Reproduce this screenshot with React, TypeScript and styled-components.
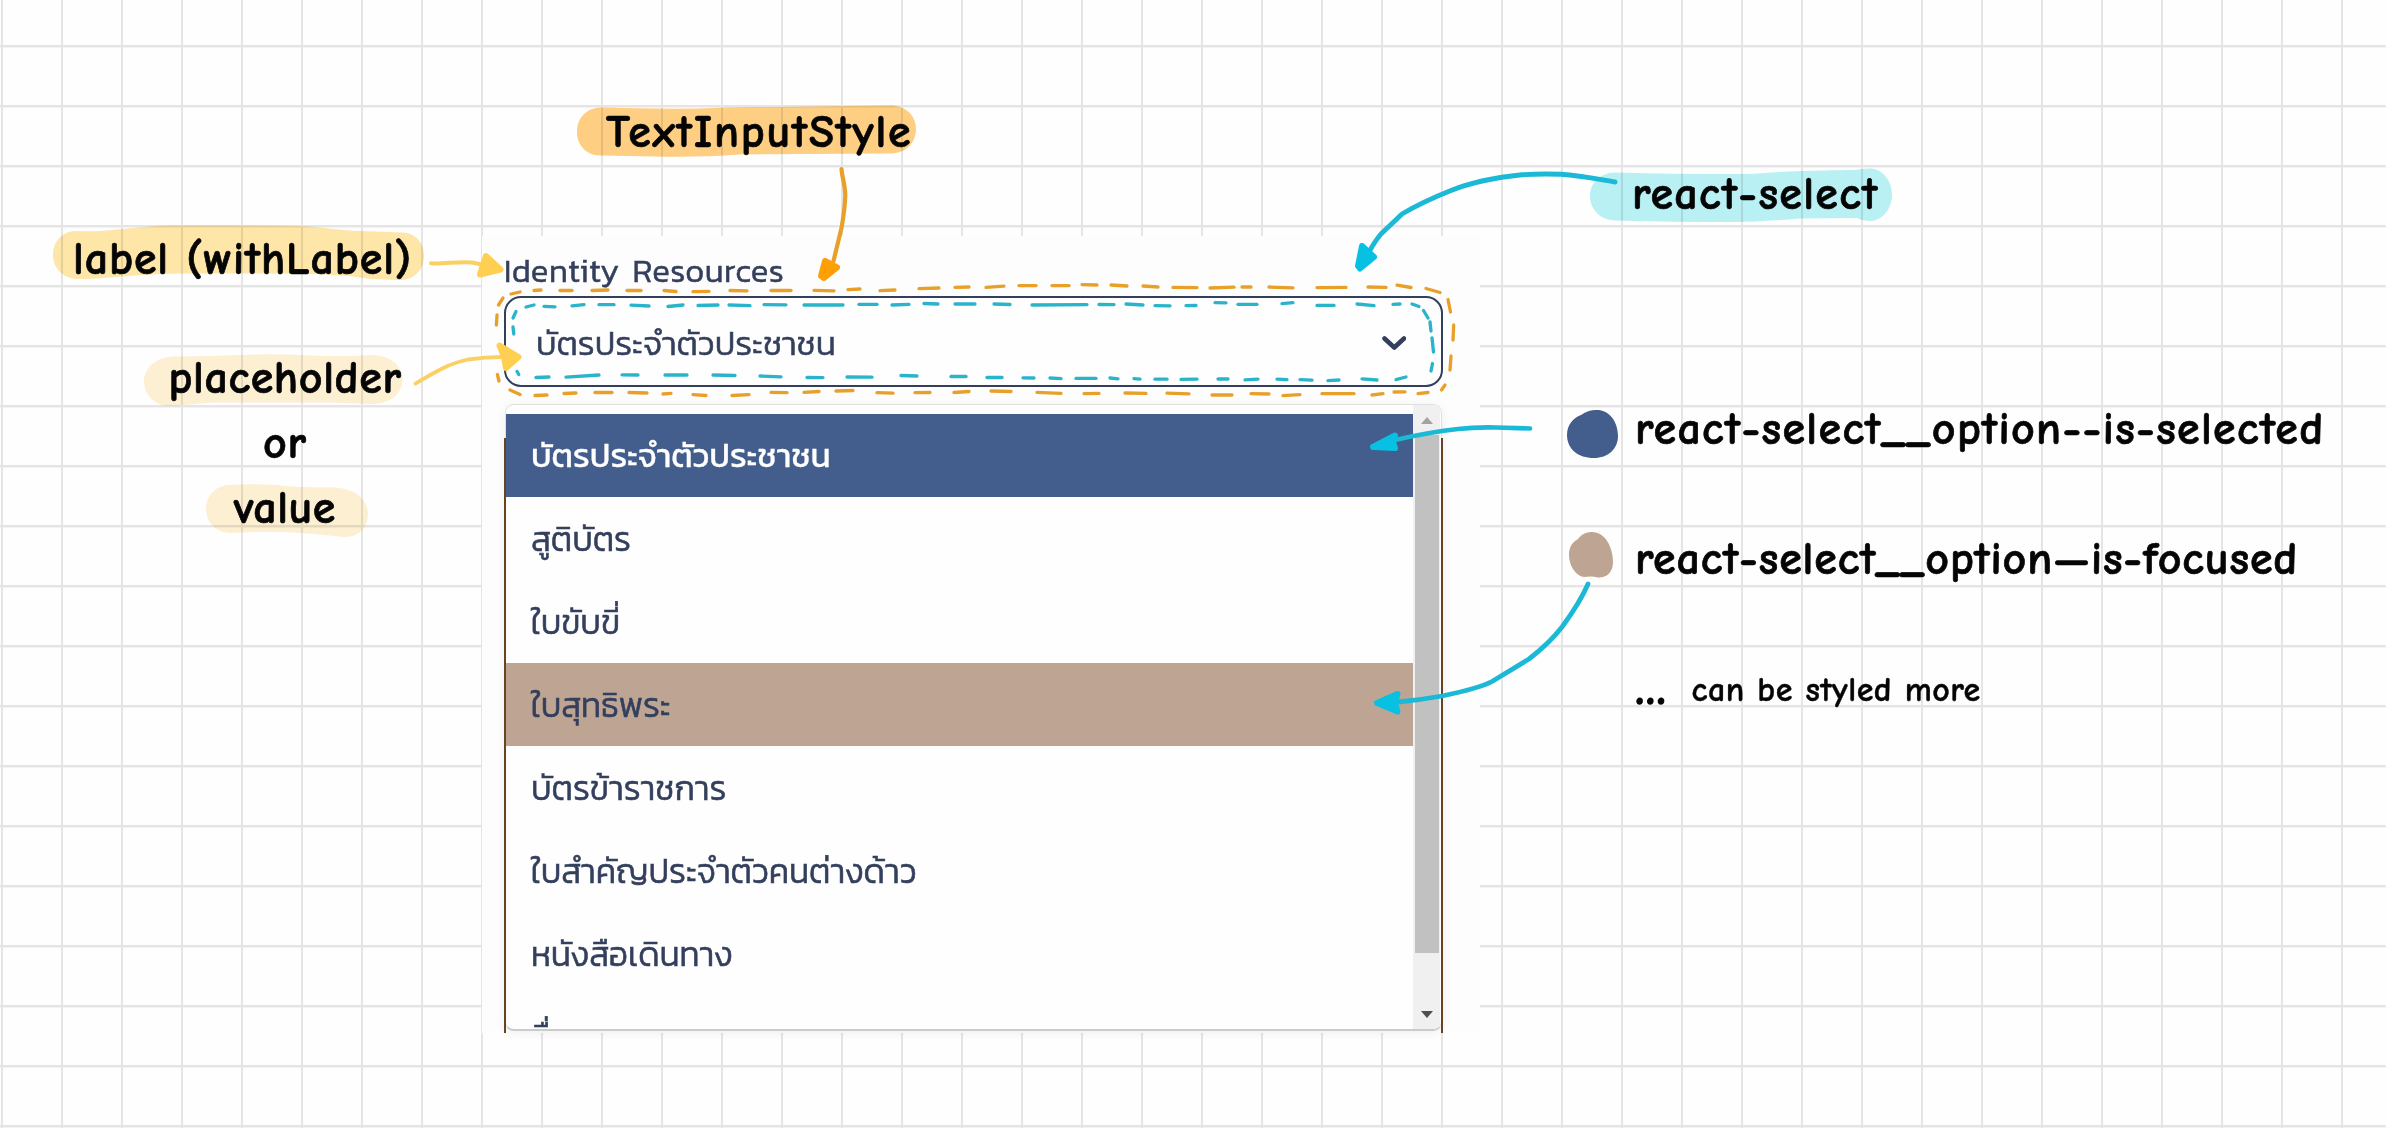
import React from "react";
import styled, { createGlobalStyle } from "styled-components";

const GlobalStyle = createGlobalStyle`
  body { margin: 0; background: #fff; }
  *, *::before, *::after { box-sizing: border-box; }
`;

const navy = "#333f5c";
const cyan = "#1bb9d6";
const cyanHead = "#08c0e2";
const orange = "#e8a029";
const yellow = "#fbd062";

const Board = styled.main`
  position: relative;
  width: 2386px;
  height: 1128px;
  overflow: hidden;
  background-color: #fefefe;
  background-image:
    linear-gradient(to right, transparent 1px, #e5e5e5 1px, #e5e5e5 3px, transparent 3px),
    linear-gradient(to bottom, #e5e5e5 2px, #f3f3f3 2px, #f3f3f3 3px, transparent 3px);
  background-size: 60px 60px;
  background-position: 0 0, 0 45px;
`;

const Specimen = styled.section`
  position: absolute;
  left: 482px;
  top: 236px;
  width: 998px;
  height: 797px;
  padding: 8px 37px 0 22px;
  display: flex;
  flex-direction: column;
  background: #fdfdfd;
  color: ${navy};
  font-family: Kanit, "Noto Sans Thai", "Noto Sans", sans-serif;
  font-weight: 300;
  -webkit-text-stroke: 0.6px currentColor;
`;

const FieldLabel = styled.label`
  height: 52px;
  padding-left: 0;
  font-size: 33px;
  line-height: 53px;
  letter-spacing: 0.45px;
  word-spacing: 5px;
`;

const Control = styled.div`
  height: 91px;
  flex: none;
  display: flex;
  align-items: center;
  justify-content: space-between;
  padding: 3px 35px 0 30px;
  border: 2px solid ${navy};
  border-radius: 17px;
  background: #fefefe;
  font-size: 33.4px;
`;

const MenuFrame = styled.div`
  position: relative;
  height: 629px;
  margin-top: 17px;
  padding: 0 1px 2px;
  &::after {
    content: "";
    position: absolute;
    inset: 34px 0 0 0;
    border: solid #66441f;
    border-width: 0 2px;
    pointer-events: none;
  }
`;

const Menu = styled.div`
  height: 627px;
  display: flex;
  overflow: hidden;
  border: 1px solid #e2dfdf;
  border-bottom: 2px solid #cbcbcb;
  border-radius: 9px;
  background: #fefefe;
  box-shadow: 0 2px 12px rgba(0, 0, 0, 0.06);
`;

const Options = styled.ul`
  flex: 1;
  margin: 0;
  padding: 9px 0 0;
  overflow: hidden;
  list-style: none;
`;

const Option = styled.li<{ $state?: "selected" | "focused" }>`
  height: 83px;
  padding: ${(p) => (p.$state === "selected" ? "0" : "1px")} 0 0 25px;
  font-size: ${(p) => (p.$state === "selected" ? 33.2 : 33.5)}px;
  line-height: 83px;
  font-weight: ${(p) => (p.$state === "selected" ? 400 : 300)};
  color: ${(p) => (p.$state === "selected" ? "#fff" : navy)};
  background: ${(p) =>
    p.$state === "selected" ? "#435e8c" : p.$state === "focused" ? "#bea593" : "transparent"};
  -webkit-text-stroke-width: ${(p) => (p.$state === "selected" ? "0.3px" : "0.6px")};
`;

const Scrollbar = styled.div`
  width: 27px;
  margin-right: 1px;
  display: flex;
  flex-direction: column;
  align-items: center;
  background: #f0f0f0;
`;

const Thumb = styled.div`
  width: 24px;
  height: 518px;
  margin-top: 11px;
  margin-bottom: 58px;
  background: #c1c1c1;
`;

const ScrollArrow = styled.div<{ $dir: "up" | "down" }>`
  width: 0;
  height: 0;
  margin-top: ${(p) => (p.$dir === "up" ? "12px" : "0")};
  border: 6px solid transparent;
  ${(p) =>
    p.$dir === "up"
      ? "border-top: 0; border-bottom: 7px solid #a3a3a3;"
      : "border-bottom: 0; border-top: 7px solid #505050;"}
`;

const Layer = styled.svg<{ $marker?: boolean }>`
  position: absolute;
  inset: 0;
  width: 2386px;
  height: 1128px;
  pointer-events: none;
  mix-blend-mode: ${(p) => (p.$marker ? "multiply" : "normal")};
`;

const Note = styled.span<{ $size?: number; $gap?: number; $ink?: number }>`
  font-family: "Comic Neue", "Comic Sans MS", Inter, sans-serif;
  font-feature-settings: "liga" 0;
  font-weight: 700;
  font-size: ${(p) => p.$size ?? 46}px;
  line-height: 60px;
  letter-spacing: ${(p) => p.$gap ?? 0.85}px;
  white-space: pre;
  color: #050505;
  -webkit-text-stroke: ${(p) => p.$ink ?? 0.7}px #050505;
`;

const Pin = styled.div<{ $x: number; $y: number }>`
  position: absolute;
  left: ${(p) => p.$x}px;
  top: ${(p) => p.$y}px;
  display: flex;
`;

const ValueNotes = styled(Pin)`
  width: 234px;
  flex-direction: column;
  align-items: center;
  gap: 5px;
`;

const Legend = styled(Pin)`
  flex-direction: column;
  gap: 70px;
`;

const LegendRow = styled.div`
  display: grid;
  grid-template-columns: 68px auto;
  height: 60px;
`;

const Swatch = styled.svg`
  width: 52px;
  height: 60px;
`;

const MoreNotes = styled.div`
  grid-column: 2;
  display: flex;
  align-items: center;
  gap: 25px;
`;

type Seg = [number, number, number, number];

const orangeDashes: Seg[] = [
  [511, 294, 520, 292], [534, 290.5, 541, 290], [560, 290.5, 572, 290.5], [592, 290.5, 608, 290], [627, 290.5, 641, 290.5],
  [664, 290.5, 676, 291.5], [693, 291.7, 709, 291.3], [730, 290.5, 747, 290.8], [771, 290.5, 791, 290.5], [814, 290.3, 834, 290.8],
  [848, 289.7, 860, 289], [880, 290.7, 895, 290], [919, 288.6, 939, 288], [955, 287.3, 969, 287], [986, 287.3, 1004, 286.2],
  [1019, 285.6, 1036, 285.6], [1052, 285.6, 1069, 285.6], [1082, 284.6, 1097, 285], [1111, 285, 1127, 286], [1143, 286, 1158, 287],
  [1173, 287.4, 1197, 287.6], [1210, 288, 1234, 287.2], [1242, 287, 1251, 287], [1269, 287, 1293, 287.8], [1317, 287.6, 1346, 287.4],
  [1368, 287, 1386, 287.4], [1397, 285.2, 1411, 287.5], [1426, 288.5, 1440, 292.5], [1448, 299.5, 1450.5, 312],
  [1453.7, 325, 1453, 340], [1451, 356, 1450, 370], [1445, 385, 1441.5, 390],
  [510, 390, 520, 394.5], [535, 395.5, 547, 395], [564, 393.5, 576, 393], [595, 392.5, 612, 392.5], [629, 392.5, 647, 393],
  [663, 394, 671, 393.4], [693, 394.6, 706, 395.5], [732, 395.5, 749, 394.7], [771, 392.3, 787, 392.6], [804, 392.3, 819, 391.5],
  [836, 391, 853, 390.5], [877, 392.7, 893, 393.2], [915, 392.7, 930, 392.5], [954, 392.5, 969, 391.5], [991, 391, 1011, 391.5],
  [1037, 392.4, 1061, 393.4], [1084, 393.6, 1099, 393.4], [1125, 393, 1146, 393.4], [1167, 393.2, 1189, 393.8], [1212, 395, 1232, 395],
  [1251, 393.6, 1269, 394], [1283, 395.6, 1300, 394.7], [1322, 393.6, 1354, 393.6], [1372, 395, 1383, 393.7], [1394, 392, 1405, 391.8],
  [1418, 393.6, 1428, 392.5], [503, 298, 498.5, 305], [497, 315, 496.4, 325], [497.4, 374.5, 499, 381],
];

const cyanDashes: Seg[] = [
  [526, 307, 534, 305], [544, 306.3, 555, 306.8], [572, 305.8, 584, 304.6], [599, 304.7, 614, 304.7], [631, 305.2, 649, 306],
  [668, 306.5, 683, 305], [698, 305.5, 718, 305], [729, 305, 750, 305.6], [764, 304.6, 786, 304.8], [804, 305, 843, 305],
  [859, 304.3, 877, 304.3], [892, 305, 909, 304.3], [924, 303.5, 938, 304], [955, 304, 975, 304], [994, 304, 1010, 304.5],
  [1032, 305, 1087, 304.6], [1099, 304.5, 1114, 304.6], [1126, 304, 1143, 305], [1155, 305.6, 1170, 305.8], [1186, 305.6, 1196, 305.5],
  [1215, 302.6, 1226, 302.8], [1238, 304.3, 1257, 304.3], [1282, 303.6, 1293, 302.6], [1317, 305.4, 1334, 305.4],
  [1357, 304, 1374, 305.6], [1393, 304.4, 1400, 304], [1412, 304, 1419, 306.5], [1423.5, 310.5, 1428, 318], [1430, 322, 1431, 331],
  [1432, 338, 1433.5, 352], [1432.5, 363.5, 1431, 371], [516, 311.5, 513, 318], [513, 327, 513.8, 334], [517, 371.5, 518.8, 374.5],
  [536, 377.5, 549, 377], [566, 377.2, 599, 375], [622, 374.8, 638, 375], [665, 375, 687, 375], [713, 375, 735, 375.5],
  [760, 376, 781, 376.8], [807, 377.5, 823, 377.6], [847, 377, 872, 377.2], [901, 375.5, 917, 376], [951, 376.5, 966, 376.5],
  [987, 377.5, 1002, 377.5], [1023, 377.8, 1034, 378], [1050, 378, 1061, 378.6], [1076, 378.4, 1096, 378.4], [1110, 378, 1118, 378.8],
  [1134, 378.6, 1140, 379.2], [1155, 379.2, 1167, 379.2], [1181, 379.4, 1197, 379.2], [1218, 379, 1228, 379], [1245, 379.8, 1258, 379.2],
  [1277, 379.2, 1287, 379.6], [1300, 379.6, 1312, 380.2], [1328, 380.6, 1339, 380], [1362, 378.8, 1377, 380], [1396, 379.6, 1406, 377],
];

const Dashes = ({ items, color }: { items: Seg[]; color: string }) => (
  <g stroke={color} strokeWidth={3.3} strokeLinecap="round" fill="none">
    {items.map(([x1, y1, x2, y2], i) => (
      <line key={i} x1={x1} y1={y1} x2={x2} y2={y2} />
    ))}
  </g>
);

const options: { text: string; state?: "selected" | "focused" }[] = [
  { text: "บัตรประจำตัวประชาชน", state: "selected" },
  { text: "สูติบัตร" },
  { text: "ใบขับขี่" },
  { text: "ใบสุทธิพระ", state: "focused" },
  { text: "บัตรข้าราชการ" },
  { text: "ใบสำคัญประจำตัวคนต่างด้าว" },
  { text: "หนังสือเดินทาง" },
  { text: "อื่นๆ" },
];

export default function App() {
  return (
    <>
      <GlobalStyle />
      <Board>
        <Specimen>
          <FieldLabel>Identity Resources</FieldLabel>
          <Control>
            <span>บัตรประจำตัวประชาชน</span>
            <svg width="24" height="14" viewBox="0 0 24 14" fill="none" stroke={navy} strokeWidth="4.6" strokeLinecap="round" strokeLinejoin="round">
              <path d="M2.5 2.500L12.3 11.500L22 2.500" />
            </svg>
          </Control>
          <MenuFrame>
            <Menu>
              <Options>
                {options.map((o) => (
                  <Option key={o.text} $state={o.state}>{o.text}</Option>
                ))}
              </Options>
              <Scrollbar>
                <ScrollArrow $dir="up" />
                <Thumb />
                <ScrollArrow $dir="down" />
              </Scrollbar>
            </Menu>
          </MenuFrame>
        </Specimen>

        <Layer $marker viewBox="0 0 2386 1128">
          <path fill="#ffe6a9" d="M75 231Q90 231.500 100 231C120 230 140 226.500 165 225.500Q230 225 300 226C325 227 340 230.500 360 231L402 232.500C416 233 424 243 424 256C424 270 414 280 400 280C380 279.500 365 279 350 276Q320 273.500 290 273.500L180 273.500C155 274 130 276 115 277Q95 279.500 77 279C62 278 53 267 53 255C53 242 62 231.500 75 231Z" />
          <path fill="#fdf0d3" d="M175 356.500Q215 356 240 355Q275 353.500 310 355.500Q345 357 372 355C390 355 402.500 366 402.500 379C402.500 394 390 404 372 404Q350 403 330 402.500L220 402.500C195 403 185 406 165 406C152 403 144 393 144 382C144 367 157 357 175 356.500Z" />
          <path fill="#fdf0d3" d="M228 485Q250 483.500 275 485Q295 487.500 335 487.500C355 489 368 499 368 514C368 528 358 537 345 537Q320 534 295 532.500Q260 531 228 533C214 531 206 521 206 509C206 496 215 486.500 228 485Z" />
          <path fill="#ffd084" d="M601 107.500Q650 109 700 108.500Q730 106.500 770 107L893 105.500C908 107 916 117 916 129C916 143 906 152.500 892 153.500L740 154.500Q700 157.500 655 156.500L600 155.500C586 155 577 145 577 132C577 118 586 108 601 107.500Z" />
          <path fill="#b9f1f5" d="M1615 172.500Q1690 174.500 1750 174C1780 172 1800 170.500 1855 170Q1862 168 1872 168.500C1884 170 1892 182 1892 195C1892 209 1882 221 1870 221Q1860 220 1857 218L1800 218.500Q1760 222 1735 222Q1680 222 1615 220.500C1600 220 1590 209 1590 196C1590 183 1600 173 1615 172.500Z" />
        </Layer>

        <Pin $x={606} $y={103}>
          <Note $gap={1.75}>TextInputStyle</Note>
        </Pin>
        <Pin $x={73} $y={230}>
          <Note>label (withLabel)</Note>
        </Pin>
        <ValueNotes $x={168} $y={349}>
          <Note $gap={0.6}>placeholder</Note>
          <Note>or</Note>
          <Note $gap={0.5}>value</Note>
        </ValueNotes>
        <Pin $x={1632} $y={165}>
          <Note $gap={1.3}>react-select</Note>
        </Pin>
        <Legend $x={1567} $y={400}>
          <LegendRow>
            <Swatch viewBox="1567 400 52 60">
              <path fill="#435e8c" d="M1597 410C1608 410 1618 420 1618 436C1618 449 1608 458 1594 458C1578 458 1567 449 1567 435C1567 425 1573 418 1581 415C1587 411 1591 410 1597 410Z" />
            </Swatch>
            <Note $gap={1.32}>react-select__option--is-selected</Note>
          </LegendRow>
          <LegendRow>
            <Swatch viewBox="1567 530 52 60">
              <path fill="#bea593" d="M1592 532C1605 532 1613 547 1613 562C1613 573 1606 578 1598 577.500C1593 576 1588 576.500 1584 577C1576 576 1569 566 1569 555C1569 546 1573 542 1578 539C1582 534 1586 532 1592 532Z" />
            </Swatch>
            <Note>react-select__option—is-focused</Note>
          </LegendRow>
          <LegendRow>
            <MoreNotes>
              <Note $ink={1.6}>…</Note>
              <Note $size={34} $gap={0.5} $ink={0.4}>can be styled more</Note>
            </MoreNotes>
          </LegendRow>
        </Legend>

        <Layer viewBox="0 0 2386 1128">
          <Dashes items={orangeDashes} color={orange} />
          <Dashes items={cyanDashes} color="#2ab4cb" />
          <g fill="none" strokeLinecap="round" strokeLinejoin="round">
            <path stroke={yellow} strokeWidth="4" d="M431 263.300C445 264 460 261 472 262.500L484 265" />
            <path stroke={yellow} strokeWidth="3.800" d="M415.500 383.500C435 372 450 363 468 359.500Q485 357 502 357" />
            <path stroke={orange} strokeWidth="4.200" d="M841.500 169C842 177 845 184 845.300 195Q845 208 841.500 228L833.500 261" />
            <path stroke={cyan} strokeWidth="4.900" d="M1615 182C1597 179 1580 175.500 1561 174.300Q1540 173.500 1522 174.800Q1480 179 1451 190.500Q1422 202 1402 214L1381 234Q1375 241 1369 252" />
            <path stroke={cyan} strokeWidth="4.600" d="M1530 428.500L1496 427.500Q1475 427 1458 429Q1430 432 1395 440" />
            <path stroke={cyan} strokeWidth="4.800" d="M1588 584C1582 598 1573 612 1562 627C1552 640 1538 652 1529 659L1492 681.500Q1480 688 1442 696Q1420 700 1398 702" />
          </g>
          <g strokeWidth="6" strokeLinejoin="round">
            <path fill="#ffcf52" stroke="#ffcf52" d="M486 256L500.500 269.500L480 274.500L483 265Z" />
            <path fill="#ffcf52" stroke="#ffcf52" d="M499.500 345.500L518.500 357L506 368L504 357Z" />
            <path fill="#ff9f08" stroke="#ff9f08" d="M825 261L837 267.500L824 278L821 276Z" />
            <path fill={cyanHead} stroke={cyanHead} d="M1362 246L1374 257L1360 268.500L1358 266Z" />
            <path fill={cyanHead} stroke={cyanHead} d="M1395 435.500L1373 447L1395 448L1393 442Z" />
            <path fill={cyanHead} stroke={cyanHead} d="M1397.500 694L1377 703L1397.500 711.500L1395 703Z" />
          </g>
        </Layer>
      </Board>
    </>
  );
}
